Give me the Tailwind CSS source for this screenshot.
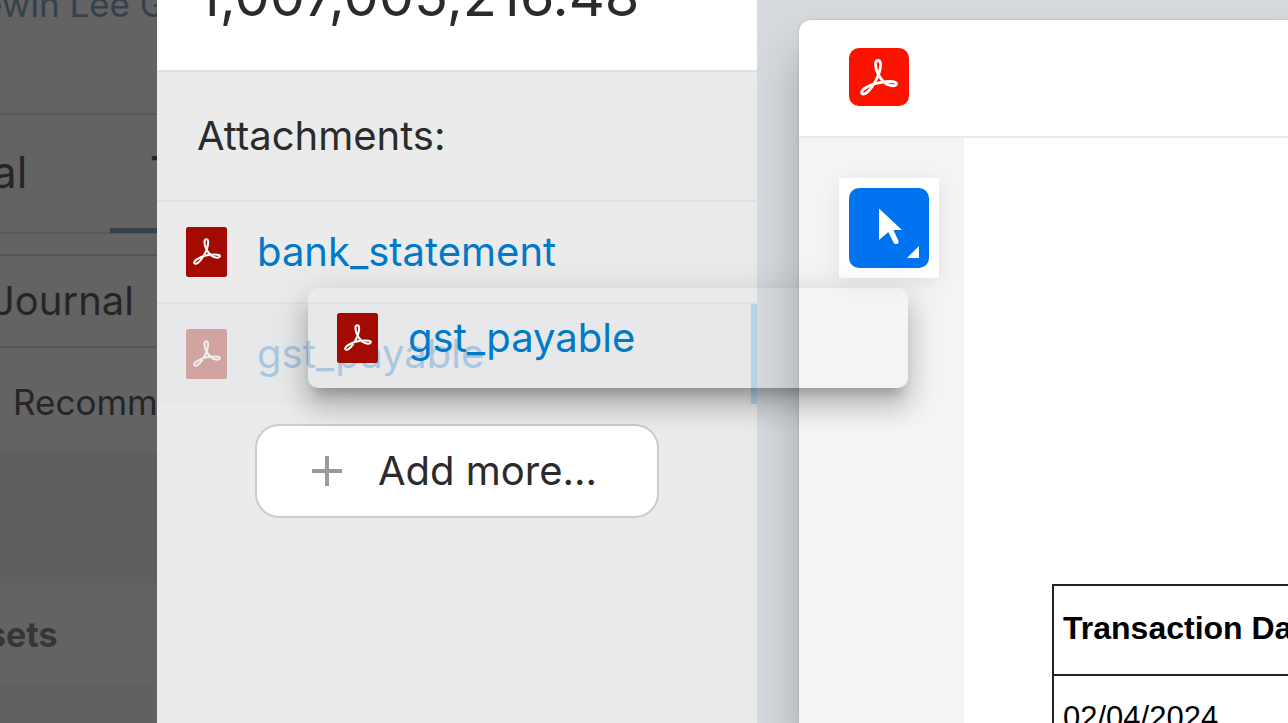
<!DOCTYPE html>
<html lang="en">
<head>
    <meta charset="UTF-8">
    <meta name="viewport" content="width=device-width, initial-scale=1.0">
    <script src="https://cdn.jsdelivr.net/npm/@tailwindcss/browser@4"></script>
    <title>Attachments</title>
</head>
<body class="flex h-screen overflow-hidden bg-[#d7dbe0] font-['Inter',sans-serif] text-[#2b2b2b]">
    <!-- shared icons -->
    <svg class="hidden">
        <symbol id="acrobat" viewBox="0 0 60 60">
            <path d="M29.5 12.5C32.5 12.5 32 20 29.5 27C26.5 34.5 19 46 14.5 46C11.5 46 12 43 15.5 40.5C21 36.5 32 33.5 41 33.5C45.5 33.5 48 34.5 47.5 36C46.5 38.5 41 38.5 36 35C31 31 26.5 23 26.5 16C26.5 13.5 28 12.5 29.5 12.5Z" fill="none" stroke="#fff" stroke-width="2.8" stroke-linejoin="round"/>
        </symbol>
        <symbol id="pdf-file" viewBox="0 0 41 50">
            <rect width="41" height="50" rx="2.5" fill="#a30b00"/>
            <use href="#acrobat" x="-1" y="3" width="44" height="44"/>
        </symbol>
    </svg>

    <!-- page behind the dialog -->
    <section class="w-[157px] shrink-0 overflow-hidden whitespace-nowrap bg-[#636363] text-[#252525]">
        <div class="flex h-[115px] items-start border-b-2 border-[#595959]">
            <a href="#" class="-mt-5 -ml-[18px] text-[35px] leading-[48px] text-[#33414d]">ewin Lee G</a>
        </div>
        <nav class="flex h-[119px] border-b-2 border-[#595959] text-[44px] leading-[114px]">
            <a href="#" class="-ml-2 w-[118px] shrink-0">al</a>
            <a href="#" class="h-[118px] w-[200px] shrink-0 border-b-5 border-[#33414d] pl-10 font-medium">T</a>
        </nav>
        <div class="mt-5 h-[94px] border-y-2 border-[#555555]">
            <h2 class="-ml-2 text-[40px] leading-[90px]">Journal</h2>
        </div>
        <p class="h-[104px] pl-[13px] text-[35px] leading-[108px]">Recomm</p>
        <div class="h-[131px] bg-[#5f5f5f]"></div>
        <p class="-ml-[13px] h-[102px] text-[34px] leading-[104px] font-bold text-[#363636]">sets</p>
        <div class="h-[102px] bg-[#616161]"></div>
    </section>

    <!-- attachments panel -->
    <main class="w-[600px] shrink-0 bg-[#ebebeb] text-[40px]">
        <div class="flex h-[72px] items-start border-b-2 border-[#dee2e6] bg-white pl-10">
            <p class="-mt-8 text-[56px] leading-[56px]">1,007,005,216.48</p>
        </div>
        <h3 class="h-[130px] border-b-2 border-[#dee2e6] pl-10 leading-[128px]">Attachments:</h3>
        <ul>
            <li class="flex h-[102px] items-center gap-[30px] border-b-2 border-[#dee2e6] pl-[29px]">
                <svg class="h-[50px] w-[41px]"><use href="#pdf-file"/></svg>
                <a href="#" class="text-[#0079c8]">bank_statement</a>
            </li>
            <li class="h-[100px] border-r-6 border-[#b5d5e6] bg-[#e6e8ea]">
                <div class="flex h-full items-center gap-[30px] pl-[29px] opacity-30">
                    <svg class="h-[50px] w-[41px]"><use href="#pdf-file"/></svg>
                    <a href="#" class="text-[#2080c8]">gst_payable</a>
                </div>
            </li>
        </ul>
        <button class="mx-auto mt-5 flex h-[94px] w-[404px] items-center gap-9 rounded-3xl border-2 border-[#cccccc] bg-white pl-[55px]">
            <svg class="size-[30px]" viewBox="0 0 30 30"><path d="M15 0V30M0 15H30" stroke="#9b9b9b" stroke-width="4"/></svg>
            Add more...
        </button>
    </main>

    <!-- document viewer -->
    <section class="mt-5 ml-[42px] flex min-w-0 flex-1 flex-col overflow-hidden rounded-tl-xl bg-white shadow-[0_0_2px_1px_rgb(0_0_0/0.07),0_30px_50px_rgb(0_0_0/0.25)]">
        <header class="flex h-[118px] shrink-0 items-center border-b-2 border-[#e9e9e9] pb-[2px] pl-[50px]">
            <svg class="h-[58px] w-[60px]" viewBox="0 0 60 58"><rect width="60" height="58" rx="10" fill="#fa1400"/><use href="#acrobat" width="60" height="60"/></svg>
        </header>
        <div class="flex min-h-0 flex-1">
            <aside class="w-[165px] shrink-0 bg-[#f4f4f4] pt-10 pl-10">
                <div class="size-[100px] bg-white p-[10px] shadow-[0_4px_20px_rgb(0_0_0/0.08)]">
                    <button class="block size-20 rounded-[10px] bg-[#0073f0]" aria-label="Select">
                        <svg viewBox="0 0 80 80" fill="#fff"><path d="M30 20.5L53 42H44.5L49.5 53Q50 55.5 47.5 56Q45.5 56.5 44.5 54.5L39.3 44L30 52Z"/><path d="M70 58V70H58Z"/></svg>
                    </button>
                </div>
            </aside>
            <div class="min-w-0 flex-1 overflow-hidden bg-white pt-[446px] pl-[88px]">
                <table class="w-[600px] border-collapse text-left font-['Liberation_Sans',sans-serif] text-[32px] leading-10 text-black">
                    <tr class="h-[90px]"><th class="border-2 border-[#222222] px-[9px] pb-1">Transaction Date</th></tr>
                    <tr class="h-[90px]"><td class="border-2 border-[#222222] px-[9px] pb-1 text-[31px]">02/04/2024</td></tr>
                </table>
            </div>
        </div>
    </section>

    <div class="absolute top-[288px] left-[308px] flex h-[100px] w-[600px] items-center gap-[30px] rounded-[10px] pl-[29px] text-[40px] shadow-[0_12px_12px_-7px_rgb(0_0_0/0.2),0_20px_25px_2px_rgb(0_0_0/0.14),0_8px_35px_5px_rgb(0_0_0/0.12)]">
        <svg class="h-[50px] w-[41px]"><use href="#pdf-file"/></svg>
        <a href="#" class="text-[#0079c8]">gst_payable</a>
    </div>
</body>
</html>
